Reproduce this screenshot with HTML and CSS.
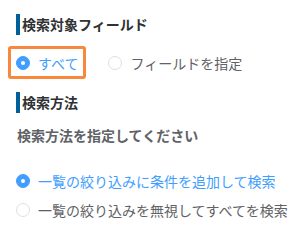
FILE: index.html
```html
<!DOCTYPE html>
<html lang="ja">

<head>
    <meta charset="UTF-8">
    <title>検索設定</title>
    <link rel="stylesheet" href="styles.css">
</head>

<body>
    <div class="panel">
        <div class="sec_title">検索対象フィールド</div>
        <div class="field_row">
            <label class="radio checked boxed"><span class="dot"></span>すべて</label>
            <label class="radio"><span class="dot"></span>フィールドを指定</label>
        </div>

        <div class="sec_title second">検索方法</div>
        <p class="form_label">検索方法を指定してください</p>
        <div class="method_list">
            <label class="radio checked"><span class="dot"></span>一覧の絞り込みに条件を追加して検索</label>
            <label class="radio"><span class="dot"></span>一覧の絞り込みを無視してすべてを検索</label>
        </div>
    </div>
</body>

</html>
```

FILE: styles.css
```css
* {
    margin: 0px;
    padding: 0px;
    box-sizing: border-box;
}

body {
    font-family: "Noto Sans CJK JP", "Noto Sans", sans-serif;
    font-size: 14px;
    color: #606266;
    background: white;
}

.panel {
    padding-top: 14px;
}

.sec_title {
    margin-left: 16px;
    border-left: 4px solid #00609A;
    padding-left: 2px;
    height: 21px;
    line-height: 21px;
    font-weight: bold;
    color: #303133;
}

.sec_title.second {
    margin-top: 13px;
}

.field_row {
    display: flex;
    align-items: center;
    margin-top: 11px;
    margin-left: 8px;
    gap: 22px;
}

.radio {
    display: flex;
    align-items: center;
    gap: 8px;
    height: 20px;
    line-height: 20px;
    color: #606266;
}

.radio .dot {
    width: 14px;
    height: 14px;
    border: 1px solid #DCDFE6;
    border-radius: 50%;
    background: white;
    position: relative;
}

.radio.checked {
    color: #409EFF;
}

.radio.checked .dot {
    border-color: #409EFF;
    background: #409EFF;
}

.radio.checked .dot::after {
    content: "";
    position: absolute;
    left: 4px;
    top: 4px;
    width: 4px;
    height: 4px;
    border-radius: 50%;
    background: white;
}

.boxed {
    height: 33px;
    border: 3px solid #F7883E;
    border-radius: 3px;
    padding: 0px 5px;
}

.form_label {
    margin-top: 12px;
    margin-left: 17px;
    line-height: 20px;
    font-weight: bold;
    color: #606266;
}

.method_list {
    display: flex;
    flex-direction: column;
    gap: 9px;
    margin-top: 26px;
    margin-left: 16px;
}
```
